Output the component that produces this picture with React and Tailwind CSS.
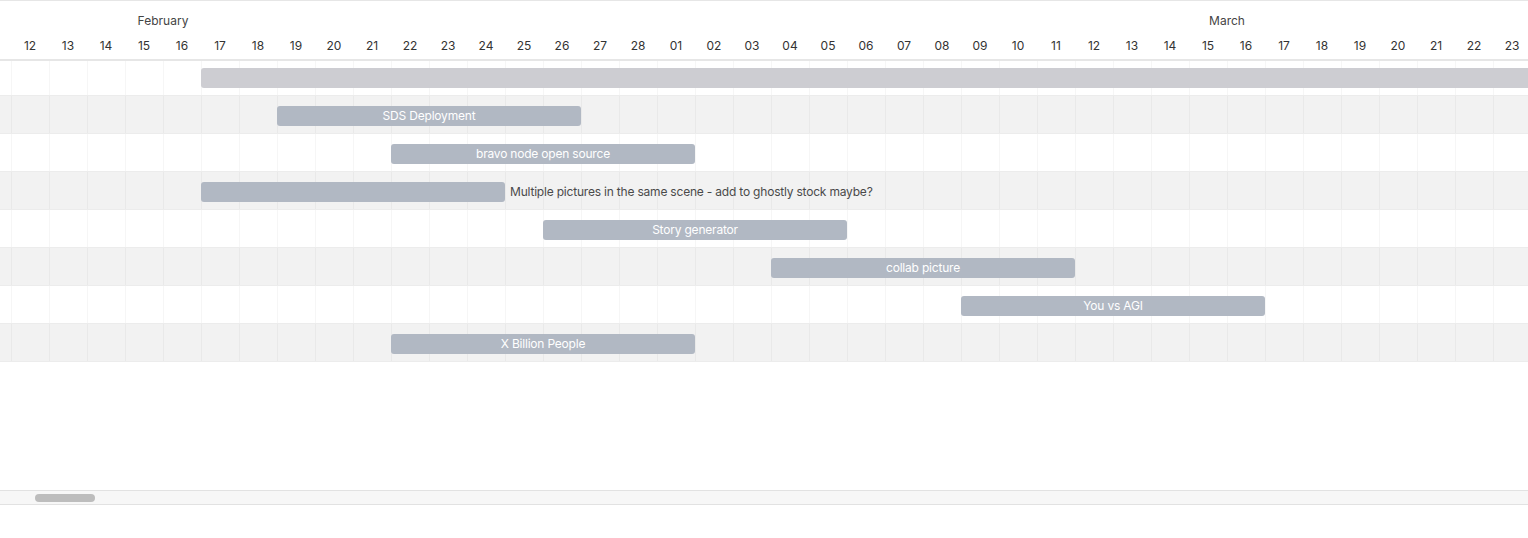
import React from 'react';

const COL = 38;
const OFFSET = -27; // first visible column (Feb 11) starts off-screen

const days = [
  ...Array.from({ length: 18 }, (_, i) => ({ m: 'Feb', d: 11 + i })),
  ...Array.from({ length: 24 }, (_, i) => ({ m: 'Mar', d: 1 + i })),
];

const months = [
  { name: 'February', at: 5 }, // left edge of Feb 16
  { name: 'March', at: 18 + 15 }, // left edge of Mar 16
];

const tasks = [
  { start: 6, len: 40, label: '', color: 'bg-[#cdcdd2]' },
  { start: 8, len: 8, label: 'SDS Deployment' },
  { start: 11, len: 8, label: 'bravo node open source' },
  { start: 6, len: 8, label: '', side: 'Multiple pictures in the same scene - add to ghostly stock maybe?' },
  { start: 15, len: 8, label: 'Story generator' },
  { start: 21, len: 8, label: 'collab picture' },
  { start: 26, len: 8, label: 'You vs AGI' },
  { start: 11, len: 8, label: 'X Billion People' },
];

const pad = (n) => String(n).padStart(2, '0');

function Row({ task, index }) {
  const first = index === 0;
  const gray = index % 2 === 1;
  const top = first ? 7 : 10;
  return (
    <div
      className={`relative border-b border-[#ececec] ${first ? 'h-[35px]' : 'h-[38px]'} ${gray ? 'bg-[#f2f2f2]' : 'bg-white'}`}
    >
      {/* grid lines */}
      <div className="absolute inset-0 flex" style={{ marginLeft: OFFSET }}>
        {days.map((d, i) => (
          <div key={i} className="w-[38px] shrink-0 h-full border-l border-black/[0.035]" />
        ))}
      </div>
      <div
        className={`absolute h-[20px] rounded-[3px] flex items-center justify-center text-white text-[12px] tracking-[-0.2px] leading-none whitespace-nowrap ${task.color || 'bg-[#b1b8c3]'}`}
        style={{ left: OFFSET + task.start * COL, width: task.len * COL, top }}
      >
        {task.label}
      </div>
      {task.side && (
        <div
          className="absolute h-[20px] flex items-center text-[12px] tracking-[-0.2px] text-[#4a4a4a] whitespace-nowrap"
          style={{ left: OFFSET + (task.start + task.len) * COL + 5, top }}
        >
          {task.side}
        </div>
      )}
    </div>
  );
}

export default function App() {
  return (
    <div className="w-[1528px] h-[538px] bg-white overflow-hidden flex flex-col font-['Inter','Noto_Sans',sans-serif] text-[#333]">
      {/* Header */}
      <div className="border-t border-b-2 border-[#e6e6e6] shrink-0">
        <div className="relative h-[32px]">
          {months.map((m) => (
            <div
              key={m.name}
              className="absolute top-[12px] -translate-x-1/2 text-[12px] leading-4 text-[#444]"
              style={{ left: OFFSET + m.at * COL }}
            >
              {m.name}
            </div>
          ))}
        </div>
        <div className="h-[26px] flex items-center" style={{ marginLeft: OFFSET }}>
          {days.map((d, i) => (
            <div key={i} className="w-[38px] shrink-0 text-center text-[12px] leading-4 text-[#333]">
              {i === 0 || i === days.length - 1 ? '' : pad(d.d)}
            </div>
          ))}
        </div>
      </div>

      {/* Rows */}
      <div className="shrink-0">
        {tasks.map((t, i) => (
          <Row key={i} task={t} index={i} />
        ))}
      </div>

      <div className="flex-1" />

      {/* Horizontal scrollbar */}
      <div className="h-[15px] shrink-0 bg-[#f7f7f7] border-y border-[#e2e2e2] flex items-center">
        <div className="ml-[35px] w-[60px] h-[8px] rounded-full bg-[#bdbdbd]" />
      </div>
      <div className="h-[33px] shrink-0" />
    </div>
  );
}
